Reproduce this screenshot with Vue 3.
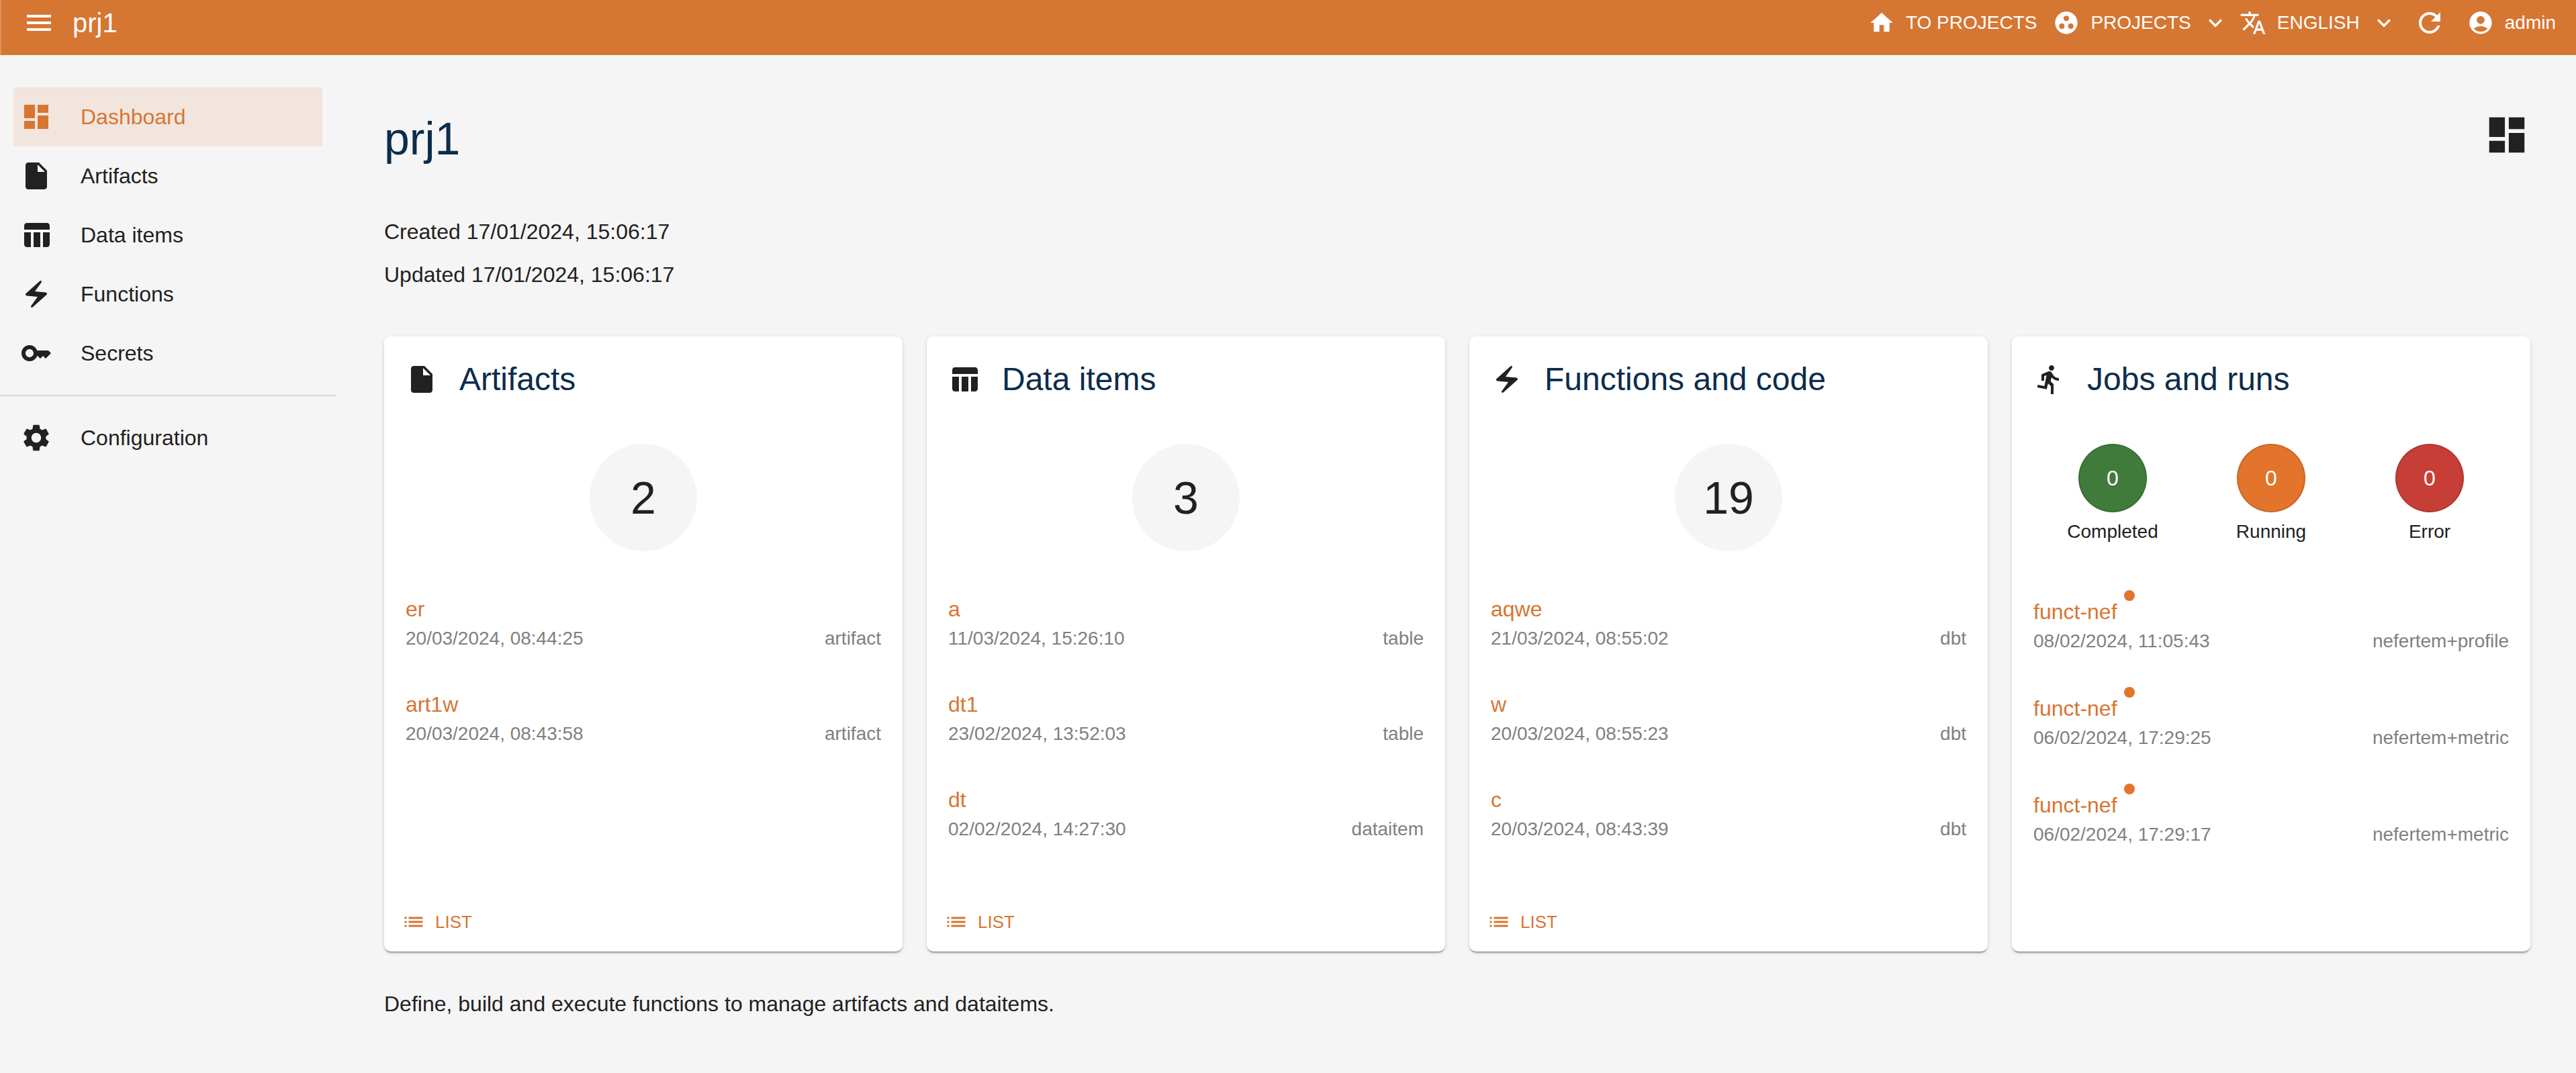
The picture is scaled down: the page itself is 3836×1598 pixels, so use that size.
<script setup>
const icons = {
  menu: 'M3 18h18v-2H3v2zm0-5h18v-2H3v2zm0-7v2h18V6H3z',
  home: 'M10 20v-6h4v6h5v-8h3L12 3 2 12h3v8z',
  group: 'M12 2C6.48 2 2 6.48 2 12s4.48 10 10 10 10-4.48 10-10S17.52 2 12 2zM8 17.5c-1.38 0-2.5-1.12-2.5-2.5s1.12-2.5 2.5-2.5 2.5 1.12 2.5 2.5-1.12 2.5-2.5 2.5zM9.5 8c0-1.38 1.12-2.5 2.5-2.5s2.5 1.12 2.5 2.5-1.12 2.5-2.5 2.5S9.5 9.38 9.5 8zm6.5 9.5c-1.38 0-2.5-1.12-2.5-2.5s1.12-2.5 2.5-2.5 2.5 1.12 2.5 2.5-1.12 2.5-2.5 2.5z',
  expand: 'M16.59 8.59 12 13.17 7.41 8.59 6 10l6 6 6-6z',
  translate: 'm12.87 15.07-2.54-2.51.03-.03c1.74-1.94 2.98-4.17 3.71-6.53H17V4h-7V2H8v2H1v1.99h11.17C11.5 7.92 10.44 9.75 9 11.35 8.07 10.32 7.3 9.19 6.69 8h-2c.73 1.63 1.73 3.17 2.98 4.56l-5.09 5.02L4 19l5-5 3.11 3.11.76-2.04zM18.5 10h-2L12 22h2l1.12-3h4.75L21 22h2l-4.5-12zm-2.62 7 1.62-4.33L19.12 17h-3.24z',
  refresh: 'M17.65 6.35C16.2 4.9 14.21 4 12 4c-4.42 0-7.99 3.58-7.99 8s3.57 8 7.99 8c3.73 0 6.84-2.55 7.73-6h-2.08c-.82 2.33-3.04 4-5.65 4-3.31 0-6-2.69-6-6s2.69-6 6-6c1.66 0 3.14.69 4.22 1.78L13 11h7V4l-2.35 2.35z',
  account: 'M12 2C6.48 2 2 6.48 2 12s4.48 10 10 10 10-4.48 10-10S17.52 2 12 2zm0 4c1.93 0 3.5 1.57 3.5 3.5S13.93 13 12 13s-3.5-1.57-3.5-3.5S10.07 6 12 6zm0 14c-2.03 0-4.43-.82-6.14-2.88C7.55 15.8 9.68 15 12 15s4.45.8 6.14 2.12C16.43 19.18 14.03 20 12 20z',
  dashboard: 'M3 13h8V3H3v10zm0 8h8v-6H3v6zm10 0h8V11h-8v10zm0-18v6h8V3h-8z',
  file: 'M6 2c-1.1 0-1.99.9-1.99 2L4 20c0 1.1.89 2 1.99 2H18c1.1 0 2-.9 2-2V8l-6-6H6zm7 7V3.5L18.5 9H13z',
  table: 'M10 10.02h5V21h-5zM17 21h3c1.1 0 2-.9 2-2v-9h-5v11zm3-18H5c-1.1 0-2 .9-2 2v3h19V5c0-1.1-.9-2-2-2zM3 19c0 1.1.9 2 2 2h3V10H3v9z',
  bolt: 'M14.69 2.21 4.33 11.49c-.64.58-.28 1.65.58 1.73L13 14l-4.85 6.76c-.22.31-.19.74.08 1.01.3.3.77.31 1.08.02l10.36-9.28c.64-.58.28-1.65-.58-1.73L11 10l4.85-6.76c.22-.31.19-.74-.08-1.01-.3-.3-.77-.31-1.08-.02z',
  key: 'M21 10h-8.35C11.83 7.67 9.61 6 7 6c-3.31 0-6 2.69-6 6s2.69 6 6 6c2.61 0 4.83-1.67 5.65-4H13l2 2 2-2 2 2 4-4.04L21 10zM7 15c-1.65 0-3-1.35-3-3s1.35-3 3-3 3 1.35 3 3-1.35 3-3 3z',
  settings: 'M19.14 12.94c.04-.3.06-.61.06-.94 0-.32-.02-.64-.07-.94l2.03-1.58c.18-.14.23-.41.12-.61l-1.92-3.32c-.12-.22-.37-.29-.59-.22l-2.39.96c-.5-.38-1.03-.7-1.62-.94l-.36-2.54c-.04-.24-.24-.41-.48-.41h-3.84c-.24 0-.43.17-.47.41l-.36 2.54c-.59.24-1.13.57-1.62.94l-2.39-.96c-.22-.08-.47 0-.59.22L2.74 8.87c-.12.21-.08.47.12.61l2.03 1.58c-.05.3-.09.63-.09.94s.02.64.07.94l-2.03 1.58c-.18.14-.23.41-.12.61l1.92 3.32c.12.22.37.29.59.22l2.39-.96c.5.38 1.03.7 1.62.94l.36 2.54c.05.24.24.41.48.41h3.84c.24 0 .44-.17.47-.41l.36-2.54c.59-.24 1.13-.56 1.62-.94l2.39.96c.22.08.47 0 .59-.22l1.92-3.32c.12-.22.07-.47-.12-.61l-2.01-1.58zM12 15.6c-1.98 0-3.6-1.62-3.6-3.6s1.62-3.6 3.6-3.6 3.6 1.62 3.6 3.6-1.62 3.6-3.6 3.6z',
  run: 'M13.49 5.48c1.1 0 2-.9 2-2s-.9-2-2-2-2 .9-2 2 .9 2 2 2zm-3.6 13.9 1-4.4 2.1 2v6h2v-7.5l-2.1-2 .6-3c1.3 1.5 3.3 2.5 5.5 2.5v-2c-1.9 0-3.5-1-4.3-2.4l-1-1.6c-.4-.6-1-1-1.7-1-.3 0-.5.1-.8.1l-5.2 2.2v4.7h2v-3.4l1.8-.7-1.6 8.1-4.9-1-.4 2 7 1.4z',
  list: 'M3 13h2v-2H3v2zm0 4h2v-2H3v2zm0-8h2V7H3v2zm4 4h14v-2H7v2zm0 4h14v-2H7v2zM7 7v2h14V7H7z',
}

const menu = [
  { label: 'Dashboard', icon: 'dashboard', active: true },
  { label: 'Artifacts', icon: 'file' },
  { label: 'Data items', icon: 'table' },
  { label: 'Functions', icon: 'bolt' },
  { label: 'Secrets', icon: 'key' },
]

const cards = [
  {
    title: 'Artifacts', icon: 'file', count: 2,
    rows: [
      { name: 'er', date: '20/03/2024, 08:44:25', kind: 'artifact' },
      { name: 'art1w', date: '20/03/2024, 08:43:58', kind: 'artifact' },
    ],
  },
  {
    title: 'Data items', icon: 'table', count: 3,
    rows: [
      { name: 'a', date: '11/03/2024, 15:26:10', kind: 'table' },
      { name: 'dt1', date: '23/02/2024, 13:52:03', kind: 'table' },
      { name: 'dt', date: '02/02/2024, 14:27:30', kind: 'dataitem' },
    ],
  },
  {
    title: 'Functions and code', icon: 'bolt', count: 19,
    rows: [
      { name: 'aqwe', date: '21/03/2024, 08:55:02', kind: 'dbt' },
      { name: 'w', date: '20/03/2024, 08:55:23', kind: 'dbt' },
      { name: 'c', date: '20/03/2024, 08:43:39', kind: 'dbt' },
    ],
  },
  {
    title: 'Jobs and runs', icon: 'run',
    states: [
      { label: 'Completed', tone: 'success', value: 0 },
      { label: 'Running', tone: 'warning', value: 0 },
      { label: 'Error', tone: 'error', value: 0 },
    ],
    rows: [
      { name: 'funct-nef', date: '08/02/2024, 11:05:43', kind: 'nefertem+profile' },
      { name: 'funct-nef', date: '06/02/2024, 17:29:25', kind: 'nefertem+metric' },
      { name: 'funct-nef', date: '06/02/2024, 17:29:17', kind: 'nefertem+metric' },
    ],
  },
]
</script>

<template>
  <div class="app">
    <header class="bar">
      <button class="bar-btn toggle" type="button" aria-label="Toggle menu">
        <svg class="icon" viewBox="0 0 24 24"><path :d="icons.menu" /></svg>
      </button>
      <span class="bar-title">prj1</span>
      <div class="bar-actions">
        <button class="bar-btn" type="button">
          <svg class="icon medium" viewBox="0 0 24 24"><path :d="icons.home" /></svg>TO PROJECTS
        </button>
        <button class="bar-btn projects" type="button" aria-haspopup="menu">
          <svg class="icon medium" viewBox="0 0 24 24"><path :d="icons.group" /></svg>PROJECTS
          <svg class="icon medium" viewBox="0 0 24 24"><path :d="icons.expand" /></svg>
        </button>
        <button class="bar-btn language" type="button" aria-haspopup="menu">
          <svg class="icon medium" viewBox="0 0 24 24"><path :d="icons.translate" /></svg>ENGLISH
          <svg class="icon medium" viewBox="0 0 24 24"><path :d="icons.expand" /></svg>
        </button>
        <button class="bar-btn" type="button" aria-label="Refresh">
          <svg class="icon" viewBox="0 0 24 24"><path :d="icons.refresh" /></svg>
        </button>
        <button class="bar-btn account" type="button" aria-haspopup="menu">
          <svg class="icon medium" viewBox="0 0 24 24"><path :d="icons.account" /></svg>admin
        </button>
      </div>
    </header>

    <div class="body">
      <nav class="side">
        <a v-for="m in menu" :key="m.label" href="#" class="side-link" :class="{ active: m.active }">
          <svg class="icon" viewBox="0 0 24 24"><path :d="icons[m.icon]" /></svg>{{ m.label }}
        </a>
        <hr class="divider" />
        <a href="#" class="side-link">
          <svg class="icon" viewBox="0 0 24 24"><path :d="icons.settings" /></svg>Configuration
        </a>
      </nav>

      <main class="main">
        <div class="heading">
          <h1>prj1</h1>
          <svg class="icon large" viewBox="0 0 24 24"><path :d="icons.dashboard" /></svg>
        </div>
        <div class="meta">
          <p>Created 17/01/2024, 15:06:17</p>
          <p>Updated 17/01/2024, 15:06:17</p>
        </div>

        <div class="cards">
          <section v-for="c in cards" :key="c.title" class="card" :class="{ jobs: c.states }">
            <div class="card-head">
              <svg class="icon" viewBox="0 0 24 24"><path :d="icons[c.icon]" /></svg>
              <h2>{{ c.title }}</h2>
            </div>
            <div class="summary">
              <div v-if="c.states" class="states">
                <div v-for="s in c.states" :key="s.label" class="state">
                  <span class="chip" :class="s.tone">{{ s.value }}</span>
                  <span>{{ s.label }}</span>
                </div>
              </div>
              <div v-else class="count">{{ c.count }}</div>
            </div>
            <ul class="rows">
              <li v-for="r in c.rows" :key="r.date">
                <div class="name">
                  <a href="#">{{ r.name }}</a>
                  <span v-if="c.states" class="dot"></span>
                </div>
                <div class="detail"><span>{{ r.date }}</span><span>{{ r.kind }}</span></div>
              </li>
            </ul>
            <div v-if="!c.states" class="card-foot">
              <a href="#" class="list-link">
                <svg class="icon small" viewBox="0 0 24 24"><path :d="icons.list" /></svg>LIST
              </a>
            </div>
          </section>
        </div>

        <p class="note">Define, build and execute functions to manage artifacts and dataitems.</p>
      </main>
    </div>
  </div>
</template>

<style>
body {
  margin: 0;
  background: #f5f5f5;
}
</style>

<style scoped>
.app {
  min-height: 100vh;
  background: #f5f5f5;
  color: #212121;
  font-family: "Liberation Sans", Arial, Helvetica, sans-serif;
  font-size: 32px;
  line-height: 48px;
}

h1,
h2,
p,
ul {
  margin: 0;
  padding: 0;
  font-weight: 400;
}

a {
  color: #d67633;
  text-decoration: none;
}

.icon {
  width: 48px;
  height: 48px;
  flex: none;
  fill: currentColor;
}

.icon.small {
  width: 36px;
  height: 36px;
}

.icon.medium {
  width: 40px;
  height: 40px;
}

.icon.large {
  width: 70px;
  height: 70px;
}

.bar {
  display: flex;
  align-items: center;
  padding: 0 8px 14px 22px;
  background: #d67633;
  box-shadow: inset 2px 0 rgba(255, 255, 255, 0.2);
  color: #fff;
}

.bar-title {
  font-size: 40px;
}

.bar-actions {
  display: flex;
  margin-left: auto;
}

.bar-btn {
  display: flex;
  align-items: center;
  gap: 16px;
  height: 68px;
  padding: 0 12px;
  border: 0;
  background: none;
  color: inherit;
  font: inherit;
  font-size: 28px;
  white-space: nowrap;
}

.toggle {
  margin-right: 14px;
}

.projects {
  padding-right: 8px;
}

.language {
  padding-left: 8px;
}

.account {
  padding: 0 22px 0 20px;
}

.body {
  display: flex;
}

.side {
  flex: none;
  width: 500px;
  padding-top: 48px;
}

.side-link {
  display: flex;
  align-items: center;
  gap: 42px;
  height: 88px;
  margin: 0 20px;
  padding: 0 10px;
  color: inherit;
}

.side-link.active {
  background: #f2e5dd;
  color: #d67633;
}

.divider {
  height: 2px;
  margin: 18px 0;
  border: 0;
  background: #d9d9d9;
}

.main {
  flex: 1;
  min-width: 0;
  padding: 84px 68px 48px 72px;
}

.heading {
  display: flex;
  justify-content: space-between;
  align-items: flex-start;
}

h1,
h2 {
  color: #0c2d4b;
}

h1 {
  font-size: 68px;
  line-height: 80px;
}

h2 {
  font-size: 48px;
}

.meta {
  display: grid;
  gap: 16px;
  margin: 75px 0 68px;
}

.cards {
  display: grid;
  grid-template-columns: repeat(4, minmax(0, 1fr));
  gap: 36px;
}

.card {
  display: flex;
  flex-direction: column;
  padding: 40px 32px 26px;
  border-radius: 10px;
  background: #fff;
  box-shadow: 0 4px 2px -2px rgba(0, 0, 0, 0.2), 0 2px 2px rgba(0, 0, 0, 0.14), 0 2px 6px rgba(0, 0, 0, 0.12);
}

.card-head {
  display: flex;
  align-items: center;
  gap: 32px;
}

.summary {
  min-height: 160px;
  margin-top: 72px;
}

.count {
  width: 160px;
  margin: 0 auto;
  border-radius: 50%;
  background: #f5f5f5;
  font-size: 68px;
  line-height: 160px;
  text-align: center;
}

.states {
  display: grid;
  grid-template-columns: repeat(3, 1fr);
}

.state {
  display: flex;
  flex-direction: column;
  align-items: center;
  gap: 9px;
  font-size: 28px;
  line-height: 40px;
}

.chip {
  box-sizing: border-box;
  width: 102px;
  border: 2px solid rgba(0, 0, 0, 0.12);
  border-radius: 50%;
  color: #fff;
  font-size: 32px;
  line-height: 98px;
  text-align: center;
}

.success {
  background: #407b3b;
}

.warning {
  background: #e3742b;
}

.error {
  background: #c73e36;
}

.rows {
  display: grid;
  gap: 54px;
  margin-top: 62px;
  list-style: none;
}

.jobs .rows {
  gap: 56px;
  margin-top: 66px;
}

.name {
  position: relative;
  width: fit-content;
}

.dot {
  position: absolute;
  top: -8px;
  right: -26px;
  width: 16px;
  height: 16px;
  border-radius: 50%;
  background: #e3742b;
}

.detail {
  display: flex;
  justify-content: space-between;
  color: #808080;
  font-size: 28px;
  line-height: 40px;
}

.card-foot {
  display: flex;
  margin-top: auto;
  padding-top: 100px;
}

.list-link {
  display: flex;
  align-items: center;
  gap: 14px;
  margin-left: -6px;
  font-size: 26px;
  line-height: 36px;
}

.note {
  margin-top: 54px;
}
</style>
